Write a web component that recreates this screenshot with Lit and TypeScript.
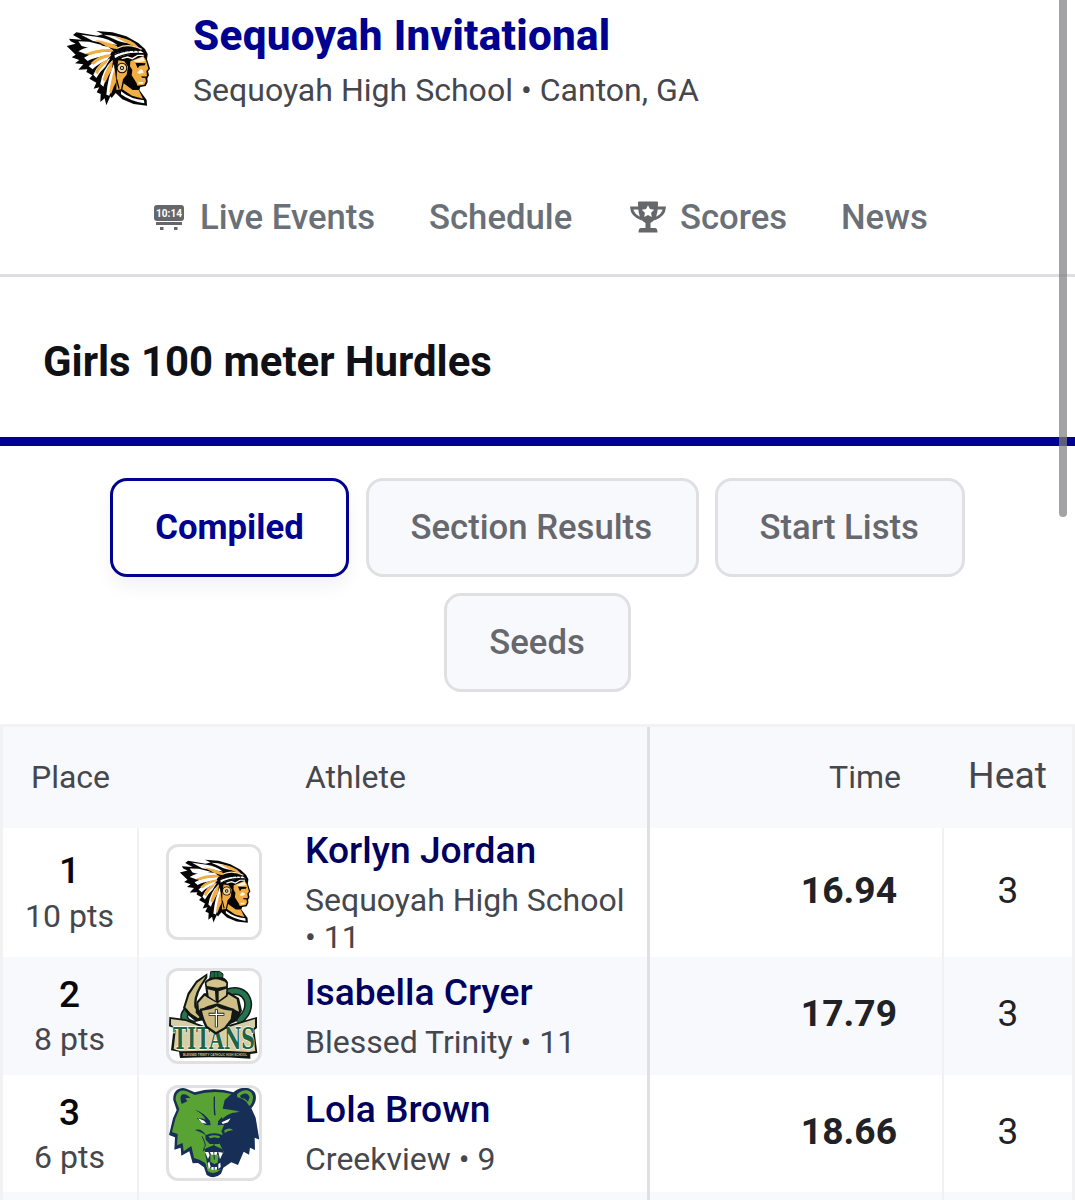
import { LitElement, html, css } from "lit";
import { customElement } from "lit/decorators.js";

const chief = (viewBox: string) => html`<svg viewBox=${viewBox} aria-hidden="true">
  <path fill="#050505" d="M138 63L186 67L228 79L264 99L284 117L292 132L290 148L299 176L293 184L296 196L291 204L292 216L286 228L270 231L267 240L289 270L290 287L250 282L216 268L196 249L184 264L180 259L168 286L163 265L150 276L151 252L139 247L147 232L130 236L138 218L117 206L126 196L108 186L111 178L84 179L99 163L74 160L87 150L64 142L76 134L49 108L76 101L61 94L56 86L94 89L68 75L78 67L140 77L158 73Z"/>
  <g fill="#fff">
    <path d="M160 74Q208 75 248 100Q222 100 204 93Q180 82 160 74Z"/>
    <path d="M92 74L138 80Q178 86 201 105Q160 100 128 93Z"/>
    <path d="M84 94L116 95L158 106L125 116L94 108Z"/>
    <path d="M84 124Q124 101 174 110L190 124Q145 118 106 132Z"/>
    <path d="M101 143Q130 124 185 124L178 136Q130 142 112 153Z"/>
    <path d="M115 169Q143 141 183 135L170 150Q142 162 127 178Z"/>
    <path d="M129 194Q144 157 180 145L165 170Q147 186 138 204Z"/>
    <path d="M150 222Q157 178 186 151L180 184Q165 210 159 230Z"/>
    <path d="M168 254Q173 198 191 162L194 197Q184 228 177 257Z"/>
    <path d="M192 132Q226 118 271 122L283 131Q230 128 194 146Z"/>
    <path d="M212 244Q242 268 281 271L282 280Q240 274 212 253Z"/>
  </g>
  <g fill="#f0ae45">
    <path d="M193 80Q227 82 252 99L268 115Q239 104 223 96Z"/>
    <path d="M134 90Q170 94 200 108L205 118Q177 115 160 104Z"/>
    <path d="M104 132Q139 115 184 117L190 124Q146 126 120 135Z"/>
    <path d="M121 160Q142 136 181 132L177 141Q147 147 130 164Z"/>
    <path d="M134 186Q146 156 176 147L168 160Q149 175 142 193Z"/>
    <path d="M157 210Q166 173 188 149L185 179Q174 195 166 216Z"/>
    <path d="M177 246Q184 200 193 175L198 215Q189 230 182 252Z"/>
    <path d="M200 178L204 151L222 154L233 170L229 194L218 208L212 238L198 240Z"/>
    <path d="M240 154L279 138L287 151L294 176L288 183L290 197L285 204L287 214L282 224L262 227L246 211L238 187Z"/>
    <path d="M220 220L247 240L265 240L278 266L245 257L216 238Z"/>
  </g>
  <g fill="#fff3d9">
    <path d="M250 152L278 141L284 153L258 158Z"/>
    <path d="M270 178L277 180L280 188L268 192L260 188Z"/>
    <path d="M264 216L280 216L277 221L265 222Z"/>
  </g>
  <g fill="#050505">
    <path d="M255 158L286 160L283 166L268 167L262 175Z"/>
    <path d="M236 164L246 180L244 196L259 220L261 232L244 224L230 206L234 190L233 174Z"/>
    <path d="M273 199L294 200L290 204L275 203Z"/>
  </g>
  <g fill="none" stroke="#050505">
    <path stroke-width="3" d="M203 116L208 130M217 112L222 127M232 110L236 125M247 112L251 126M261 117L264 128"/>
    <path stroke-width="4" d="M199 208L206 236M193 147Q226 125 288 132M190 135Q226 117 270 121"/>
  </g>
  <path fill="none" stroke="#f7dfae" stroke-width="4" d="M202 114Q235 98 274 118"/>
  <path fill="none" stroke="#fff" stroke-width="4" d="M214 146L232 141L246 146L262 136L280 136"/>
  <circle cx="215" cy="174" r="16" fill="#050505"/>
  <circle cx="215" cy="174" r="13" fill="#f6d294"/>
  <circle cx="215" cy="174" r="6" fill="#050505"/>
  <circle cx="215" cy="174" r="3" fill="#fff"/>
</svg>`;

const titans = html`<svg viewBox="42 46 270 270" aria-hidden="true">
  <path fill="none" stroke="#101d18" stroke-width="24" d="M214 112C276 84 308 160 246 199M106 157C78 178 82 199 120 208"/>
  <path fill="none" stroke="#28744e" stroke-width="15" d="M214 112C276 84 308 160 246 199M106 157C78 178 82 199 120 208"/>
  <path fill="#101814" d="M157 53L123 76L98 112L84 157L101 180L123 198L148 193L142 170L125 157Q118 120 157 66Z"/>
  <path fill="#cdbd83" d="M152 62L126 82L103 117L91 155L107 173L130 188L140 177L119 157Q111 121 145 74Z"/>
  <path fill="#111815" d="M147 113L124 139L122 171L149 201L174 224L207 214L246 196L261 165L252 127L222 109Z"/>
  <path fill="#cfbe87" d="M149 120L130 142L132 164L158 151L187 143L229 157L252 168L245 131L220 116L181 139Z"/>
  <path fill="#1d6b45" stroke="#101814" stroke-width="3" d="M164 73L167 48L193 47L204 55L202 76Z"/>
  <path stroke="#0c3c27" stroke-width="3" d="M177 49L179 71M188 49L189 70"/>
  <path fill="#111714" d="M149 79Q162 62 184 65Q211 61 219 80L218 122L188 143L155 124Z"/>
  <path fill="#d2c28b" d="M154 82Q181 60 214 82L213 92L187 96L156 91Z"/>
  <path fill="#d2c28b" d="M158 101L180 106L182 136L161 122ZM191 107L214 99L213 119L191 135Z"/>
  <path fill="#101814" d="M43 184L90 190L148 211L184 222L221 208L306 184L306 217L298 223L307 292L286 295L286 309Q183 302 75 307L72 288L48 284L56 217L42 212Z"/>
  <path fill="#d8cda6" d="M48 190L92 196L147 217L184 228L222 214L300 190L300 214L292 220L301 286L282 289Q185 282 76 287L56 280L63 216L48 208Z"/>
  <text class="titan" x="54" y="280" textLength="246" lengthAdjust="spacingAndGlyphs">TITANS</text>
  <path fill="#111714" d="M134 159Q167 157 185 145Q204 159 238 159L234 195L212 220L182 237L151 215Q138 190 134 159Z"/>
  <path fill="#cdbb82" d="M141 165Q168 163 185 152Q202 165 231 165L227 190L208 215L183 229L157 211Q146 190 141 165Z"/>
  <path fill="none" stroke="#101814" stroke-width="9" d="M184 161V215M161 176H208"/>
  <path fill="none" stroke="#fff" stroke-width="4" d="M184 163V213M163 176H206"/>
  <text class="tiny" x="84" y="302" textLength="192" lengthAdjust="spacingAndGlyphs">BLESSED TRINITY CATHOLIC HIGH SCHOOL</text>
</svg>`;

const bear = html`<svg viewBox="42 39 270 270" aria-hidden="true">
  <path fill="#172e57" d="M55 76C52 48 74 34 94 41L119 52Q178 33 235 52C255 34 286 33 300 54C307 69 300 88 289 100L302 128L313 194L299 188L300 225L285 218L282 239L266 230L249 270L229 262L205 278L198 296Q178 315 155 300L147 277L129 264L113 265L103 229L79 242L77 218L58 224L60 187L42 180L54 130L65 105Z"/>
  <path fill="#58a334" d="M62 75C61 52 77 42 96 49L119 60Q176 43 229 57L209 75L203 101L225 104L252 111L207 118L190 140L207 150L199 169L203 178L193 204L206 231L196 247L197 284Q176 301 158 288L151 264L133 254L117 249L109 213L86 229L83 204L66 211L68 177L51 171L61 132L73 103Z"/>
  <path fill="#58a334" d="M246 58C266 39 291 43 294 65C294 80 289 88 283 93L274 80Q258 68 247 67Z"/>
  <path fill="#172e57" d="M77 76Q73 54 94 59L107 68L91 70L97 79L80 87ZM255 62Q277 47 284 67L279 80L269 71L258 69Z"/>
  <g fill="#172e57">
    <path d="M118 104Q146 111 165 138L167 151L151 150L125 130Q144 129 152 134Q143 115 118 104Z"/>
    <path d="M250 107Q215 109 190 137L188 151L207 149L233 129Q213 131 206 135Q216 116 250 107Z"/>
    <path d="M176 66L180 64L180 100L182 122L177 119L176 96Z"/>
    <path d="M151 181Q178 169 204 181L205 195L192 207L164 207L152 194Z"/>
    <path d="M119 165Q140 159 153 181Q131 168 119 165ZM148 211L143 231L153 220L176 211L203 223L205 236L198 283L186 285L159 277L151 239Z"/>
  </g>
  <path fill="#58a334" d="M200 117Q222 101 255 109Q222 112 202 132ZM208 166Q224 155 235 166Q222 164 209 174Z"/>
  <path fill="#58a334" d="M160 184Q178 177 195 184L192 190L178 187L166 190ZM166 240L177 235L191 240L188 263L178 267L166 260Z"/>
  <path fill="none" stroke="#172e57" stroke-width="3" d="M177 238L178 254M177 204V214M141 184Q154 209 150 215"/>
  <path fill="#fff" d="M129 130L147 137L155 146L140 143ZM200 142L227 130L219 142L203 147Z"/>
  <path fill="#fff" d="M150 231L160 231L164 241L159 252ZM165 231H175V239H168ZM178 231H187L185 239H178ZM190 231L204 233L195 253ZM158 264L163 260L167 275L161 282ZM169 276H176V284H169ZM179 276H186V284H179ZM190 267L196 263L197 276L190 282Z"/>
</svg>`;

const boardIcon = html`<svg class="board" viewBox="0 0 30 27" aria-hidden="true">
  <rect x="0" y="0" width="30" height="16" rx="3" fill="#65676a"/>
  <text x="2" y="12" textLength="26" lengthAdjust="spacingAndGlyphs">10:14</text>
  <path fill="#65676a" d="M2 17H28V20H2ZM6 22H9.500V25H6ZM20 22H23.500V25H20Z"/>
</svg>`;

const trophyIcon = html`<svg class="trophy" viewBox="0 0 36 32" aria-hidden="true">
  <path fill="none" stroke="#65676a" stroke-width="3" d="M10 7H1.700Q2 14.500 12 18M26 7H34.300Q34 14.500 24 18"/>
  <path fill="#65676a" d="M8 1.500Q8 .5 9 .5H27Q28 .5 28 1.500C28 13 26 19 20.500 22V27H25Q27.500 27 27.500 31.500H8.500Q8.500 27 11 27H15.500V22C10 19 8 13 8 1.500Z"/>
  <path fill="#fff" d="M18 4.200L19.900 8.100L24.200 8.700L21.100 11.700L21.800 16L18 14L14.200 16L14.900 11.700L11.800 8.700L16.100 8.100Z"/>
</svg>`;

interface Result {
  place: number;
  points: number;
  name: string;
  school: string;
  time: string;
  heat: number;
  logo: unknown;
  kind: string;
}

const results: Result[] = [
  { place: 1, points: 10, name: "Korlyn Jordan", school: "Sequoyah High School • 11", time: "16.94", heat: 3, logo: chief("14 18 312 312"), kind: "first" },
  { place: 2, points: 8, name: "Isabella Cryer", school: "Blessed Trinity • 11", time: "17.79", heat: 3, logo: titans, kind: "second" },
  { place: 3, points: 6, name: "Lola Brown", school: "Creekview • 9", time: "18.66", heat: 3, logo: bear, kind: "third" },
];

@customElement("app-root")
export class AppRoot extends LitElement {
  static styles = css`
    :host { display: block; position: relative; height: 1200px; overflow: hidden; background: #fff; color: #45474d; font-family: Roboto, "Liberation Sans", sans-serif; }
    * { box-sizing: border-box; }
    svg { display: block; }
    .meet { display: flex; height: 164px; padding: 16px 0 0 55px; }
    .meet-logo { width: 104px; height: 104px; }
    .meet-text { padding-left: 34px; white-space: nowrap; }
    .meet-name { margin: -5px 0 0; font-size: 42.200px; letter-spacing: 0.300px; line-height: 50px; font-weight: 800; color: #000091; }
    .meet-place { font-size: 32.05px; line-height: 40px; margin-top: 9px; }
    .nav { display: flex; height: 113px; padding-left: 154px; align-items: center; border-bottom: 3px solid #dedee0; font-size: 34.700px; font-weight: 500; color: #6a7078; white-space: nowrap; }
    .item { display: flex; align-items: center; height: 40px; margin-top: -5px; }
    .live { width: 275px; gap: 16px; }
    .schedule { width: 201px; }
    .scores { width: 211px; gap: 14px; }
    .board { width: 30px; height: 27px; margin-top: 3px; }
    .board text { font: 700 10px Roboto, sans-serif; fill: #fff; }
    .trophy { width: 36px; height: 32px; margin-top: 1px; }
    .event { display: flex; align-items: center; height: 169px; padding: 0 0 0 43px; border-bottom: 9px solid #000091; }
    .event h2 { margin: 9px 0 0; font-size: 41.9px; line-height: 50px; font-weight: 700; color: #101116; white-space: nowrap; }
    .tabs { display: flex; flex-wrap: wrap; justify-content: center; gap: 17px 16.500px; padding: 32px 100px; height: 278px; align-content: flex-start; }
    .tab { display: flex; align-items: center; justify-content: center; height: 98.500px; margin-bottom: -0.500px; border: 3px solid #e0e0e2; border-radius: 17px; background: #f8f9fd; font-size: 34.7px; font-weight: 500; color: #66686e; white-space: nowrap; }
    .compiled { width: 239.500px; background: #fff; border-color: #000091; color: #000091; font-weight: 700; box-shadow: 0 10px 18px rgba(0, 0, 0, 0.05); }
    .sections { width: 333px; padding-right: 2px; }
    .starts { width: 250px; padding-right: 2px; }
    .seeds { width: 187px; padding-right: 1px; }
    .table { border: 3px solid #f2f2f4; border-bottom: 0; }
    .row { display: grid; grid-template-columns: 136px 511px 294px 128px; grid-template-rows: 100%; }
    .head { height: 101px; background: #f8f9fd; font-size: 32px; }
    .first { height: 129px; }
    .second { height: 118px; background: #f8f9fd; }
    .third { height: 117px; }
    .next { height: 20px; background: #f8f9fd; }
    .cell { display: flex; align-items: center; min-height: 0; }
    .place { flex-direction: column; justify-content: center; border-right: 2px solid #f1f1f4; padding-right: 1px; }
    .head .cell { padding-bottom: 2px; }
    .head .place { border-color: transparent; padding-right: 0; padding-left: 1px; }
    .first .place, .second .place, .third .place { padding-top: 2px; }
    .rank { font-size: 37px; line-height: 45px; font-weight: 500; color: #08080a; }
    .points { font-size: 32px; line-height: 45px; }
    .first .points { padding-top: 1px; }
    .athlete { border-right: 3px solid #e0e0e3; }
    .frame { flex: none; width: 96px; height: 96px; margin: -1px 0 0 27px; border: 3px solid #e1e1e3; border-radius: 12px; overflow: hidden; background: #fff; }
    .frame svg { width: 90px; height: 90px; }
    .first .frame svg { width: 88px; height: 88px; margin: 0 0 0 1px; }
    .person { width: 330px; margin-left: 43px; }
    .head .person { margin-left: 166px; }
    .name { font-size: 37.200px; line-height: 50px; font-weight: 500; color: #00005f; white-space: nowrap; }
    .school { font-size: 32px; line-height: 37px; padding: 7px 0 5px; }
    .first .school { padding: 7px 0 4px; }
    .time { justify-content: flex-end; padding: 0 45px 5px 0; font-size: 37.200px; font-weight: 700; color: #202226; border-right: 2px solid #f1f1f4; }
    .second .time { padding-bottom: 6px; }
    .head .time { padding: 0 41px 2px 0; font-size: 32px; font-weight: 400; color: inherit; border-color: transparent; }
    .heat { justify-content: center; font-size: 37px; color: #202226; padding-bottom: 5px; }
    .head .heat { font-size: 37.300px; color: inherit; padding: 0 1px 5px 0; }
    .titan { font: 700 90px "DejaVu Serif", serif; fill: #1f6343; stroke: #fff; stroke-width: 4px; paint-order: stroke; }
    .tiny { font: 700 12px "Liberation Sans", sans-serif; fill: #d2c28b; stroke: #101814; stroke-width: 4px; paint-order: stroke; }
    .scrollbar { position: absolute; top: -10px; left: 1059px; width: 8px; height: 527px; border-radius: 4px; background: rgba(128, 128, 130, 0.72); }
  `;

  render() {
    return html`
      <header class="meet">
        <div class="meet-logo">${chief("14 18 312 312")}</div>
        <div class="meet-text">
          <h1 class="meet-name">Sequoyah Invitational</h1>
          <div class="meet-place">Sequoyah High School • Canton, GA</div>
        </div>
      </header>
      <nav class="nav">
        <div class="item live">${boardIcon}<span>Live Events</span></div>
        <div class="item schedule"><span>Schedule</span></div>
        <div class="item scores">${trophyIcon}<span>Scores</span></div>
        <div class="item"><span>News</span></div>
      </nav>
      <section class="event"><h2>Girls 100 meter Hurdles</h2></section>
      <div class="tabs">
        <div class="tab compiled">Compiled</div>
        <div class="tab sections">Section Results</div>
        <div class="tab starts">Start Lists</div>
        <div class="tab seeds">Seeds</div>
      </div>
      <div class="table">
        <div class="row head">
          <div class="cell place">Place</div>
          <div class="cell athlete"><div class="person">Athlete</div></div>
          <div class="cell time">Time</div>
          <div class="cell heat">Heat</div>
        </div>
        ${results.map(
          (r) => html`<div class="row ${r.kind}">
            <div class="cell place"><div class="rank">${r.place}</div><div class="points">${r.points} pts</div></div>
            <div class="cell athlete">
              <div class="frame">${r.logo}</div>
              <div class="person"><div class="name">${r.name}</div><div class="school">${r.school}</div></div>
            </div>
            <div class="cell time">${r.time}</div>
            <div class="cell heat">${r.heat}</div>
          </div>`
        )}
        <div class="row next"><div class="cell place"></div><div class="cell athlete"></div><div class="cell time"></div><div class="cell heat"></div></div>
      </div>
      <div class="scrollbar"></div>
    `;
  }
}
